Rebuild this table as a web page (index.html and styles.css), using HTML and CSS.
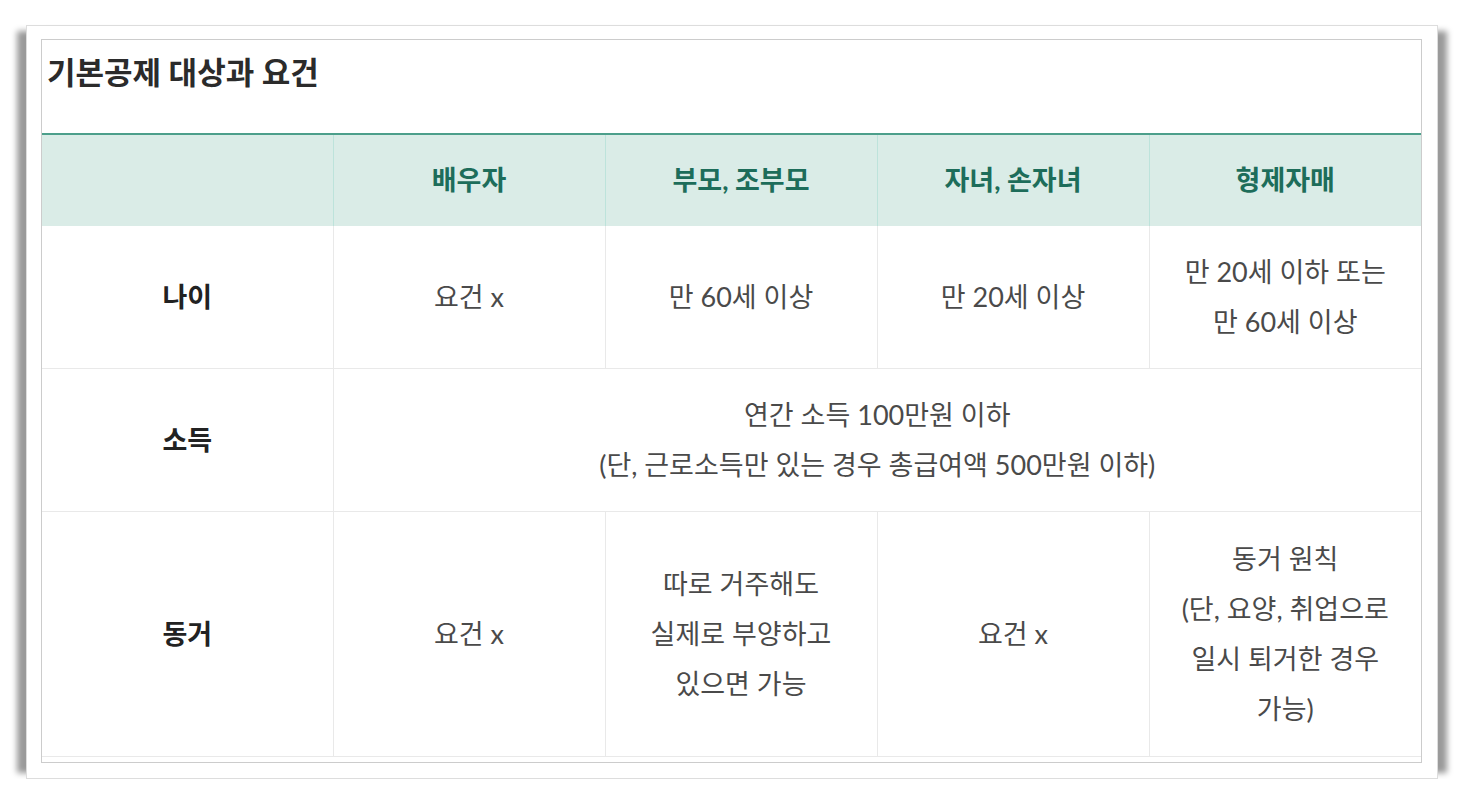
FILE: index.html
```html
<!DOCTYPE html>
<html lang="ko">
<head>
    <meta charset="UTF-8">
    <title>기본공제 대상과 요건</title>
    <link rel="stylesheet" href="styles.css">
</head>
<body>
<div class="card">
    <div class="box">
        <h2 class="title">기본공제 대상과 요건</h2>
        <table class="deduct">
            <colgroup>
                <col class="c-head">
                <col class="c-item">
                <col class="c-item">
                <col class="c-item">
                <col>
            </colgroup>
            <thead>
            <tr>
                <th></th>
                <th>배우자</th>
                <th>부모, 조부모</th>
                <th>자녀, 손자녀</th>
                <th>형제자매</th>
            </tr>
            </thead>
            <tbody>
            <tr>
                <th>나이</th>
                <td>요건 x</td>
                <td>만 60세 이상</td>
                <td>만 20세 이상</td>
                <td>만 20세 이하 또는<br>만 60세 이상</td>
            </tr>
            <tr>
                <th>소득</th>
                <td colspan="4">연간 소득 100만원 이하<br>(단, 근로소득만 있는 경우 총급여액 500만원 이하)</td>
            </tr>
            <tr>
                <th>동거</th>
                <td>요건 x</td>
                <td>따로 거주해도<br>실제로 부양하고<br>있으면 가능</td>
                <td>요건 x</td>
                <td>동거 원칙<br>(단, 요양, 취업으로<br>일시 퇴거한 경우<br>가능)</td>
            </tr>
            </tbody>
        </table>
    </div>
</div>
</body>
</html>
```

FILE: styles.css
```css
html, body {
    margin: 0;
    background: #fff;
}

body {
    padding: 25px 0 0 26px;
    font-family: Lato, "Noto Sans CJK KR", sans-serif;
    color: #4a4a4a;
}

.card {
    box-sizing: border-box;
    width: 1412px;
    height: 754px;
    padding: 13px 15px 14px 14px;
    background: #fff;
    border: 1px solid #ddd;
    box-shadow: -15px 0 6px -6px #9a9a9a, 15px 0 6px -6px #9a9a9a;
}

.box {
    border: 1px solid #ccc;
}

.title {
    margin: 0;
    height: 93px;
    padding: 11px 5px 0;
    box-sizing: border-box;
    font-size: 31px;
    line-height: 42px;
    font-weight: bold;
    color: #2b2b2b;
}

.deduct {
    width: 100%;
    border-collapse: collapse;
    table-layout: fixed;
    margin-bottom: 5px;
    border-top: 2px solid #4c9f8b;
    font-size: 27px;
    line-height: 50px;
    text-align: center;
}

.c-head {
    width: 291px;
}

.c-item {
    width: 272px;
}

.deduct thead th {
    padding: 20px 0 21px;
    background: #daece7;
    color: #1d6d5a;
    font-weight: bold;
    border-left: 1px solid #bde3db;
}

.deduct thead th:first-child {
    border-left: 0;
}

.deduct tbody th,
.deduct tbody td {
    padding: 21px 0;
    border-left: 1px solid #e9e9e9;
    border-bottom: 1px solid #e9e9e9;
    font-weight: normal;
}

.deduct tbody th {
    border-left: 0;
    font-weight: bold;
    color: #222;
}

.deduct tbody tr:last-child th,
.deduct tbody tr:last-child td {
    padding: 22px 0;
}
```
